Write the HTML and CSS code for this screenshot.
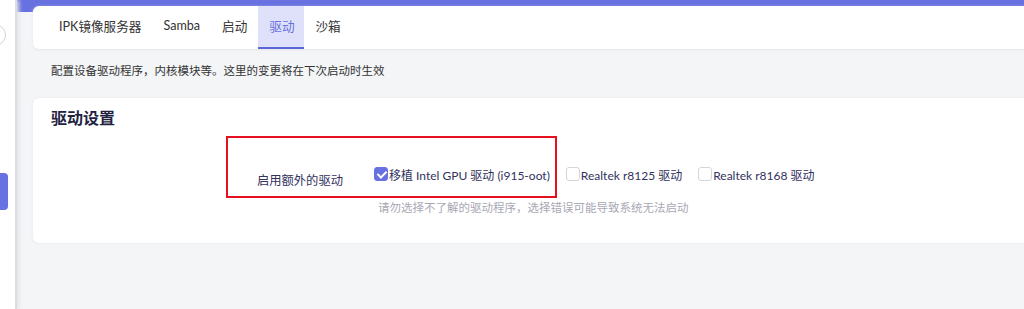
FILE: index.html
```html
<!DOCTYPE html>
<html>
  <head>
    <meta charset="utf-8">
    <link rel="stylesheet" href="styles.css">
  </head>
  <body>
    <div class="layout">
      <div class="sidebar">
        <span class="sidebar-toggle"></span>
        <span class="sidebar-active"></span>
      </div>
      <div class="main">
        <div class="header-bar"></div>
        <div class="tab-card">
          <span class="tab">IPK镜像服务器</span>
          <span class="tab">Samba</span>
          <span class="tab">启动</span>
          <span class="tab active">驱动</span>
          <span class="tab">沙箱</span>
        </div>
        <p class="page-desc">配置设备驱动程序，内核模块等。这里的变更将在下次启动时生效</p>
        <div class="section-card">
          <h3 class="section-title">驱动设置</h3>
          <div class="form-row">
            <label class="form-label">启用额外的驱动</label>
            <div class="form-field">
              <div class="options">
                <label class="option"><span class="check checked"></span>移植 Intel GPU 驱动 (i915-oot)</label>
                <label class="option"><span class="check"></span>Realtek r8125 驱动</label>
                <label class="option"><span class="check"></span>Realtek r8168 驱动</label>
              </div>
              <div class="help">请勿选择不了解的驱动程序，选择错误可能导致系统无法启动</div>
            </div>
            <div class="highlight"></div>
          </div>
        </div>
      </div>
    </div>
  </body>
</html>
```

FILE: styles.css
```css
* {
  box-sizing: border-box;
  margin: 0;
  padding: 0;
}

body {
  font-family: Lato, "Noto Sans CJK SC", sans-serif;
  font-size: 13px;
  color: #32325d;
  background: #f4f5f7;
  overflow: hidden;
  width: 1024px;
  height: 309px;
}

.layout {
  display: flex;
  height: 309px;
}

.sidebar {
  width: 17px;
  flex-shrink: 0;
  background: #fff;
  position: relative;
  overflow: hidden;
  border-right: solid 2px #dcdde2;
  box-shadow: 2px 0 4px #e2e3e8;
  z-index: 2;
}

.sidebar-toggle {
  position: absolute;
  left: -16px;
  top: 24px;
  width: 22px;
  height: 22px;
  border-radius: 50%;
  border: solid 1px #d2d3da;
}

.sidebar-active {
  position: absolute;
  left: 0;
  top: 173px;
  width: 8px;
  height: 37px;
  background: #6771e0;
  border-radius: 0 4px 4px 0;
}

.main {
  flex: 1;
  position: relative;
  margin-right: -20px;
}

.header-bar {
  height: 12px;
  background: #6771e0;
  margin-bottom: -6px;
}

.tab-card {
  position: relative;
  display: flex;
  margin-left: 16px;
  height: 43px;
  padding-left: 15px;
  background: #fff;
  border-radius: 6px 0 0 6px;
  box-shadow: 0 1px 3px #e4e5ea;
}

.tab {
  display: flex;
  align-items: center;
  padding: 0 11px 2px;
  color: #333;
  font-size: 12.6px;
  border-bottom: solid 2px transparent;
}

.tab.active {
  background: #dfe1fa;
  color: #6771e0;
  border-bottom-color: #5b66dc;
  padding: 0 10px 2px 11px;
}

.page-desc {
  margin: 12px 0 0 34px;
  font-size: 11.5px;
  color: #333;
  line-height: 20px;
}

.section-card {
  margin: 17px 0 0 16px;
  height: 145px;
  background: #fff;
  border-radius: 6px 0 0 6px;
  box-shadow: 0 0 3px #e4e5ea;
  padding: 9px 0 0 18px;
}

.section-title {
  font-size: 16px;
  font-weight: bold;
  color: #22223f;
  line-height: 22px;
}

.form-row {
  position: relative;
  display: grid;
  grid-template-columns: 323px auto;
  margin-top: 34px;
}

.form-label {
  text-align: right;
  padding-right: 31px;
  padding-top: 8px;
  font-size: 12.3px;
  color: #32325d;
}

.options {
  display: flex;
  padding-top: 4px;
}

.option {
  display: flex;
  align-items: center;
  font-size: 12px;
  color: #32325d;
  margin-right: 16px;
  line-height: 18px;
}

.check {
  width: 14px;
  height: 14px;
  border: solid 1px #d5d6dd;
  border-radius: 3px;
  background: #fff;
  margin-right: 1px;
  position: relative;
  top: -2px;
}

.check.checked {
  background: #6771e0;
  border-color: #6771e0;
}

.check.checked::after {
  content: "";
  position: absolute;
  left: 4px;
  top: 1px;
  width: 4px;
  height: 7px;
  border: solid #fff;
  border-width: 0 2px 2px 0;
  transform: rotate(45deg);
}

.help {
  margin-top: 14px;
  margin-left: 4px;
  font-size: 11.5px;
  color: #a8a8b4;
}

.highlight {
  position: absolute;
  left: 175px;
  top: -27px;
  width: 331px;
  height: 62px;
  border: solid 2px #e8101f;
}
```
